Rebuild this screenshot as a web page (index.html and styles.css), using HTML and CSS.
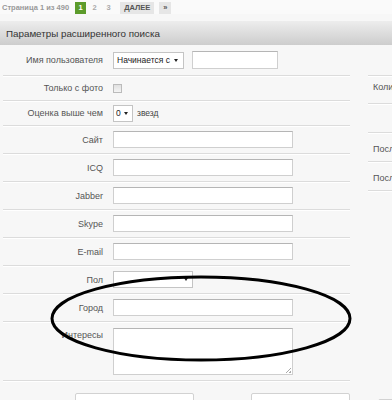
FILE: index.html
```html
<!DOCTYPE html>
<html lang="ru">
<head>
<meta charset="utf-8">
<link rel="stylesheet" href="styles.css">
</head>
<body>
<div class="page">
  <div class="pager">
    <span class="pager-info">Страница 1 из 490</span>
    <span class="pg pg-active">1</span>
    <span class="pg">2</span>
    <span class="pg">3</span>
    <span class="pg pg-btn">ДАЛЕЕ</span>
    <span class="pg pg-btn">»</span>
  </div>
  <div class="panel-head">Параметры расширенного поиска</div>
  <div class="panel">
    <div class="form">
      <div class="row row-first">
        <div class="label">Имя пользователя</div>
        <div class="field">
          <span class="select sel-name">Начинается с <i class="arrow"></i></span>
          <span class="input in-short"></span>
        </div>
      </div>
      <div class="row row-small">
        <div class="label">Только с фото</div>
        <div class="field"><span class="check"></span></div>
      </div>
      <div class="row row-small">
        <div class="label">Оценка выше чем</div>
        <div class="field"><span class="select sel-num">0 <i class="arrow"></i></span><span class="unit">звезд</span></div>
      </div>
      <div class="row">
        <div class="label">Сайт</div>
        <div class="field"><span class="input"></span></div>
      </div>
      <div class="row">
        <div class="label">ICQ</div>
        <div class="field"><span class="input"></span></div>
      </div>
      <div class="row">
        <div class="label">Jabber</div>
        <div class="field"><span class="input"></span></div>
      </div>
      <div class="row">
        <div class="label">Skype</div>
        <div class="field"><span class="input"></span></div>
      </div>
      <div class="row">
        <div class="label">E-mail</div>
        <div class="field"><span class="input"></span></div>
      </div>
      <div class="row">
        <div class="label">Пол</div>
        <div class="field"><span class="select sel-sex"><i class="arrow"></i></span></div>
      </div>
      <div class="row">
        <div class="label">Город</div>
        <div class="field"><span class="input"></span></div>
      </div>
      <div class="row row-top">
        <div class="label">Интересы</div>
        <div class="field"><span class="textarea"><i class="grip"></i></span></div>
      </div>
      <div class="buttons">
        <span class="btn btn-a"></span>
        <span class="btn btn-b"></span>
      </div>
    </div>
    <div class="side">
      <div class="side-row">Количество</div>
      <div class="side-row"></div>
      <div class="side-row">Последний</div>
      <div class="side-row">Последний</div>
      <div class="side-row side-end"></div>
      <span class="btn btn-c"></span>
    </div>
  </div>
  <svg class="ellipse" width="392" height="400" viewBox="0 0 392 400">
    <ellipse cx="201" cy="318.5" rx="149" ry="41.5" fill="none" stroke="#000" stroke-width="3"/>
  </svg>
</div>
</body>
</html>
```

FILE: styles.css
```css
* { box-sizing: border-box; }
html, body { margin: 0; padding: 0; }
body {
  width: 392px;
  height: 400px;
  overflow: hidden;
  background: #f7f7f7;
  font-family: "Liberation Sans", Arial, sans-serif;
  color: #444;
}
.page { position: relative; width: 392px; height: 400px; overflow: hidden; }

.pager {
  display: flex;
  align-items: center;
  height: 14px;
  padding: 1px 0 0 2px;
  font-size: 7.5px;
  font-weight: bold;
  color: #999;
  background: #fafafa;
}
.pager-info { margin-right: 6px; }
.pg {
  display: inline-flex;
  align-items: center;
  justify-content: center;
  height: 12px;
  min-width: 11px;
  margin-right: 3px;
  color: #aaa;
}
.pg-active { background: #5c9b2b; color: #fff; }
.pg-btn { background: #e6e6e6; color: #555; padding: 0 4px; margin-left: 3px; margin-right: 2px; }

.panel-head {
  margin-top: 7px;
  height: 24px;
  display: flex;
  align-items: center;
  padding-left: 6px;
  font-size: 9.8px;
  color: #333;
  background: linear-gradient(#ededed, #cdcdcd);
}

.panel { display: flex; }
.form { width: 347px; flex: none; margin-left: 3px; }
.row {
  display: flex;
  align-items: center;
  height: 28px;
  border-bottom: 1px solid #dcdcdc;
  box-shadow: 0 1px 0 #fff;
}
.row-first { height: 31px; }
.row-small { height: 25px; }
.row-top { height: 59px; align-items: flex-start; padding-top: 6px; }
.row-top .label { padding-top: 2px; }
.label {
  width: 110px;
  padding-right: 10px;
  text-align: right;
  font-size: 9px;
  color: #555;
}
.field { display: flex; align-items: center; gap: 8px; }
.input {
  display: block;
  width: 180px;
  height: 17px;
  background: #fff;
  border: 1px solid #cfcfcf;
  border-top-color: #b5b5b5;
}
.in-short { width: 86px; height: 18px; }
.textarea {
  position: relative;
  display: block;
  width: 180px;
  height: 47px;
  background: #fff;
  border: 1px solid #cfcfcf;
  border-top-color: #b5b5b5;
}
.grip {
  position: absolute;
  right: 1px;
  bottom: 1px;
  width: 5px;
  height: 5px;
  background: linear-gradient(135deg, transparent 45%, #aaa 45%, #aaa 55%, transparent 55%, transparent 75%, #aaa 75%);
}
.select {
  display: inline-flex;
  align-items: center;
  height: 17px;
  padding: 0 4px 0 3px;
  background: #fff;
  border: 1px solid #c4c4c4;
  font-size: 8.5px;
  color: #222;
  gap: 4px;
  white-space: nowrap;
}
.sel-name { width: 71px; }
.sel-num { width: 20px; padding-left: 2px; gap: 3px; }
.sel-sex { width: 80px; justify-content: flex-end; }
.arrow {
  display: inline-block;
  flex: none;
  width: 0; height: 0;
  border-left: 2.5px solid transparent;
  border-right: 2.5px solid transparent;
  border-top: 3px solid #222;
}
.unit { font-size: 8.5px; color: #444; margin-left: -4px; }
.check {
  display: block;
  width: 9px; height: 9px;
  border: 1px solid #bbb;
  background: linear-gradient(#e0e0e0, #f4f4f4);
}

.buttons { display: flex; padding-top: 12px; }
.btn {
  display: block;
  height: 14px;
  background: #fff;
  border: 1px solid #d2d2d2;
  border-radius: 2px;
}
.btn-a { width: 134px; margin-left: 72px; }
.btn-b { width: 112px; margin-left: 57px; }

.side { width: 100px; flex: none; margin-left: 18px; padding-top: 30px; }
.side-row {
  height: 29px;
  border-top: 1px solid #dcdcdc;
  box-shadow: inset 0 1px 0 #fff;
  padding-left: 5px;
  padding-top: 4px;
  font-size: 9px;
  color: #555;
  display: flex;
  align-items: center;
  white-space: nowrap;
}
.side-row:first-child { height: 28px; padding-top: 0; padding-bottom: 5px; }
.side-end { height: 0; }
.btn-c { margin-top: 204px; width: 60px; margin-left: 10px; }

.ellipse { position: absolute; left: 0; top: 0; pointer-events: none; }
```
